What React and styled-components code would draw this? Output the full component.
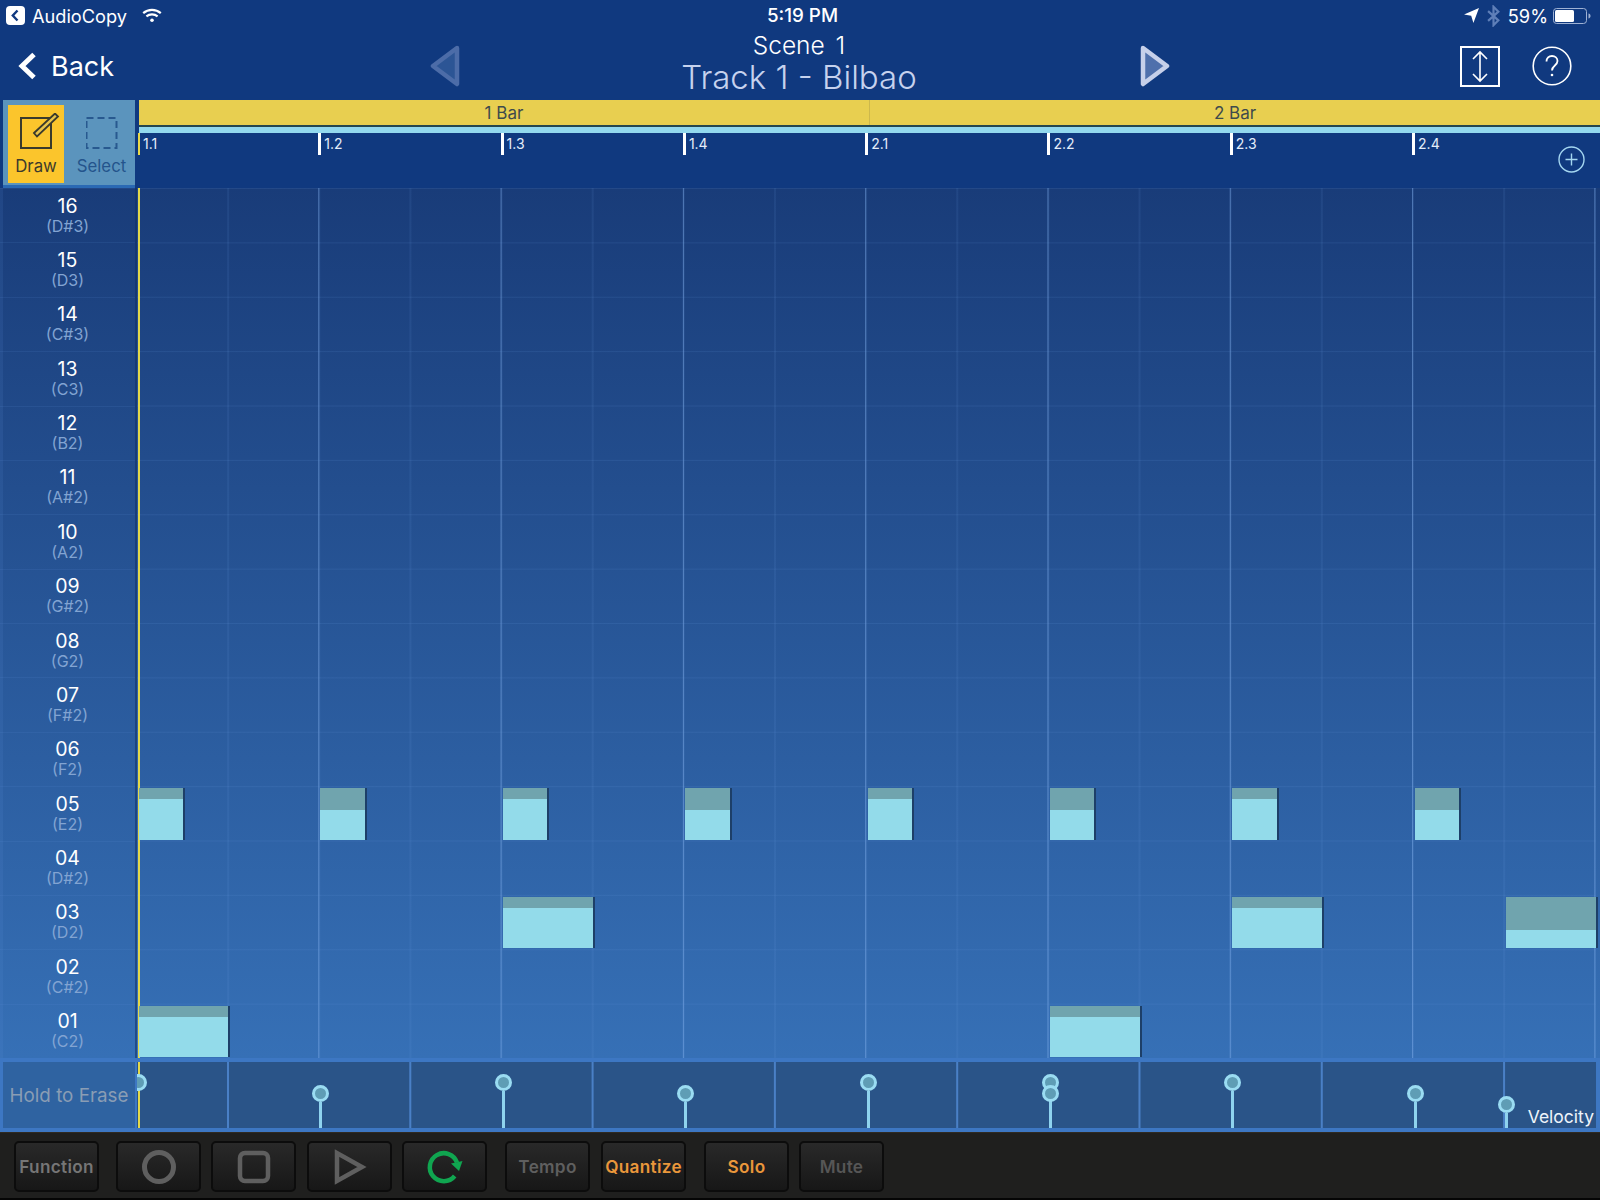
import React from 'react';
import styled, { createGlobalStyle } from 'styled-components';

const GlobalStyle = createGlobalStyle`
  html, body { margin: 0; padding: 0; background: #10397f; }
  body { font-family: Inter, "Noto Sans", sans-serif; }
`;

const Page = styled.div`
  display: flex;
  flex-direction: column;
  width: 1600px;
  height: 1200px;
  overflow: hidden;
  background: #10397f;
  color: #fff;
`;

const StatusBar = styled.div`
  display: grid;
  grid-template-columns: 1fr auto 1fr;
  align-items: center;
  height: 34px;
  padding: 0 9px 3px 6px;
  box-sizing: border-box;
  font-size: 18.2px;
`;

const StatusGroup = styled.div`
  display: flex;
  align-items: center;
  gap: ${p => p.$gap || 7}px;
  justify-content: ${p => (p.$right ? 'flex-end' : 'flex-start')};
`;

const WifiSlot = styled.span`
  display: flex;
  margin-left: 8px;
`;

const Clock = styled.div`
  margin-left: 8px;
  font-size: 18.8px;
  font-weight: 500;
`;

const NavBar = styled.div`
  display: grid;
  grid-template-columns: 430px 30px 680px 30px 1fr;
  align-items: center;
  height: 66px;
  padding-bottom: 2px;
  box-sizing: border-box;
`;

const BackLink = styled.div`
  display: flex;
  align-items: center;
  gap: 14px;
  padding-left: 18px;
  font-size: 27px;
`;

const TitleBlock = styled.div`
  display: flex;
  flex-direction: column;
  align-items: center;
  margin: -4px 0 0 -2px;
`;

const SceneTitle = styled.div`
  font-size: 24.5px;
  font-weight: 300;
  line-height: 27px;
  word-spacing: 4px;
`;

const TrackTitle = styled.div`
  font-size: 33px;
  font-weight: 300;
  line-height: 37px;
  color: #c6d2ee;
`;

const NavActions = styled.div`
  display: flex;
  justify-content: flex-end;
  align-items: center;
  gap: 32px;
  padding-right: 28px;
`;

const TopRow = styled.div`
  display: flex;
  height: 88px;
`;

const ToolBox = styled.div`
  display: flex;
  flex: none;
  width: 132px;
  margin-left: 3px;
  margin-right: 2px;
  box-sizing: border-box;
  padding: 5px 1px 2px 5px;
  background: #5b94bd;
  border-bottom: 3px solid #2a69b4;
`;

const ToolButton = styled.div`
  display: flex;
  flex-direction: column;
  align-items: center;
  flex: none;
  width: ${p => (p.$active ? 56 : 65)}px;
  margin-left: ${p => (p.$active ? 0 : 5)}px;
  padding-top: 8px;
  box-sizing: border-box;
  background: ${p => (p.$active ? '#fbc52c' : 'transparent')};
  color: ${p => (p.$active ? '#3c3a2c' : '#24548c')};
  font-size: 16.8px;
  line-height: 20px;
  svg { margin-bottom: 7px; }
`;

const Timeline = styled.div`
  display: flex;
  flex-direction: column;
  flex: 1;
`;

const BarStrip = styled.div`
  display: flex;
  height: 25px;
  margin-left: 2px;
  background: #e8cf50;
`;

const BarCell = styled.div`
  flex: 1;
  display: flex;
  align-items: center;
  justify-content: center;
  color: #3e4a4c;
  font-size: 17px;
  & + & { border-left: 1px solid #cdb84c; }
`;

const CyanStrip = styled.div`
  height: 6px;
  margin-left: 2px;
  background: #93d9ee;
  border-top: 2px solid #25474f;
`;

const Ruler = styled.div`
  display: grid;
  grid-template-columns: repeat(8, 182.3px);
  flex: 1;
`;

const BeatCell = styled.div`
  display: flex;
  align-items: flex-start;
  min-width: 0;
`;

const BeatTick = styled.div`
  width: ${p => (p.$first ? 2 : 3)}px;
  height: 22px;
  margin-left: ${p => (p.$first ? 1 : -1)}px;
  background: ${p => (p.$first ? '#e8d84a' : '#fff')};
`;

const BeatLabel = styled.span`
  margin: 2px 0 0 3px;
  font-size: 14px;
  line-height: 18px;
  color: #e4edfa;
`;

const PlusButton = styled.div`
  margin: 13px 10px 0 auto;
  line-height: 0;
`;

const Body = styled.div`
  display: flex;
  height: 870px;
  background: linear-gradient(180deg, #193c79 0%, #3670b6 100%);
`;

const LabelColumn = styled.div`
  display: flex;
  flex-direction: column;
  flex: none;
  width: 137px;
  box-sizing: border-box;
  border-right: 2px solid rgba(16, 48, 100, 0.55);
  box-shadow: inset 3px 0 0 rgba(100, 150, 220, 0.12);
`;

const KeyLabel = styled.div`
  display: flex;
  flex: 1;
  flex-direction: column;
  align-items: center;
  padding: 5.500px 0 0 0;
  box-sizing: border-box;
  border-top: 1px solid rgba(100, 150, 220, 0.12);
`;

const KeyNumber = styled.div`
  font-size: 19.500px;
  line-height: 22px;
`;

const KeyName = styled.div`
  font-size: 16px;
  line-height: 19px;
  color: #82a4d2;
`;

const Roll = styled.div`
  display: grid;
  grid-template-columns: repeat(32, 1fr);
  grid-template-rows: repeat(16, 1fr);
  width: 1459px;
  flex: none;
  background-image:
    linear-gradient(90deg, transparent 1px, #e3d94a 1px, #e3d94a 2.500px, transparent 2.500px),
    linear-gradient(rgba(100, 150, 220, 0.14) 1px, transparent 1px),
    linear-gradient(90deg, rgba(130, 175, 235, 0.5) 1.300px, transparent 1.300px),
    linear-gradient(90deg, rgba(110, 160, 230, 0.1) 2px, transparent 2px);
  background-size: 100% 100%, 100% 54.375px, 182.3px 100%, 91.15px 100%;
  background-position: 0 0, 0 0, -1px 0, -1px 0;
  background-repeat: no-repeat, repeat, repeat, repeat;
`;

const Note = styled.div`
  grid-column: ${p => p.$col} / span ${p => p.$span};
  grid-row: ${p => p.$row};
  margin: 2px -2px 1px ${p => (p.$col === 1 ? 2 : 1)}px;
  border-right: 2px solid #1d3f68;
  background: linear-gradient(
    180deg,
    #70a4ae ${p => p.$head}px,
    #93dbea ${p => p.$head}px
  );
`;

const LaneRow = styled.div`
  display: flex;
  height: 74px;
  box-sizing: border-box;
  padding: 4px 4px 4px 3px;
  background: #3d77c3;
`;

const EraseCell = styled.div`
  display: flex;
  flex: none;
  align-items: center;
  justify-content: center;
  width: 132px;
  padding-top: 1px;
  box-sizing: border-box;
  background: #2f63a1;
  color: #8a9db4;
  font-size: 18.800px;
`;

const VelocityLane = styled.div`
  position: relative;
  display: grid;
  grid-template-columns: repeat(32, 1fr);
  width: 1459px;
  margin-left: 2px;
  overflow: hidden;
  background-color: #2a5488;
  background-image:
    linear-gradient(90deg, transparent 1px, #e3d94a 1px, #e3d94a 2.500px, transparent 2.500px),
    linear-gradient(90deg, #4a80c6 2px, transparent 2px);
  background-size: 100% 100%, 182.3px 100%;
  background-position: 0 0, 90px 0;
  background-repeat: no-repeat, repeat;
`;

const VelocityStem = styled.div`
  grid-column: ${p => p.$col};
  grid-row: 1;
  align-self: end;
  display: flex;
  flex-direction: column;
  align-items: center;
  width: 17px;
  height: ${p => p.$height}px;
  margin-left: ${p => p.$dx}px;
  &::after {
    content: '';
    flex: 1;
    width: 3px;
    background: ${p => (p.$noStem ? 'transparent' : '#8fd3ee')};
  }
`;

const VelocityKnob = styled.div`
  flex: none;
  width: 17px;
  height: 17px;
  box-sizing: border-box;
  border: 3px solid #9adcf2;
  border-radius: 50%;
  background: #5f9db5;
`;

const VelocityTag = styled.div`
  position: absolute;
  right: 2px;
  bottom: 1px;
  font-size: 17.500px;
  line-height: 20px;
  color: #eef4fb;
`;

const BottomBar = styled.div`
  display: flex;
  align-items: flex-start;
  height: 68px;
  box-sizing: border-box;
  padding: 8px 0 0 14px;
  background: #1f1f1e;
  border-top: 1px solid #2f2a22;
  border-bottom: 2px solid #050505;
`;

const TransportButton = styled.div`
  display: flex;
  align-items: center;
  justify-content: center;
  flex: none;
  width: 85px;
  height: 51px;
  box-sizing: border-box;
  margin-left: ${p => p.$gap || 0}px;
  border: 2px solid #0c0c0c;
  border-radius: 5px;
  background: linear-gradient(180deg, #292929 0%, #171717 100%);
  color: ${p => p.$color || '#6a6a6a'};
  font-size: 17.200px;
  font-weight: 600;
  letter-spacing: 0.3px;
`;

const noteNames = ['D#3', 'D3', 'C#3', 'C3', 'B2', 'A#2', 'A2', 'G#2', 'G2', 'F#2', 'F2', 'E2', 'D#2', 'D2', 'C#2', 'C2'];
const beats = ['1.1', '1.2', '1.3', '1.4', '2.1', '2.2', '2.3', '2.4'];

// row counts from the top of the roll, 4 cols to a beat, head is the dark part (velocity)
const notes = [
  { row: 12, col: 1, span: 1, head: 11 },
  { row: 12, col: 5, span: 1, head: 22 },
  { row: 12, col: 9, span: 1, head: 11 },
  { row: 12, col: 13, span: 1, head: 22 },
  { row: 12, col: 17, span: 1, head: 11 },
  { row: 12, col: 21, span: 1, head: 22 },
  { row: 12, col: 25, span: 1, head: 11 },
  { row: 12, col: 29, span: 1, head: 22 },
  { row: 14, col: 9, span: 2, head: 11 },
  { row: 14, col: 25, span: 2, head: 11 },
  { row: 14, col: 31, span: 2, head: 33 },
  { row: 16, col: 1, span: 2, head: 11 },
  { row: 16, col: 21, span: 2, head: 11 },
];

const knobs = [
  { col: 1, height: 54, dx: -7, noStem: true },
  { col: 5, height: 43, dx: -7 },
  { col: 9, height: 54, dx: -7 },
  { col: 13, height: 43, dx: -7 },
  { col: 17, height: 54, dx: -7 },
  { col: 21, height: 54, dx: -7 },
  { col: 21, height: 43, dx: -7 },
  { col: 25, height: 54, dx: -7 },
  { col: 29, height: 43, dx: -7 },
  { col: 31, height: 32, dx: -7 },
];

const AppBadge = () => (
  <svg width="19" height="19" viewBox="0 0 19 19">
    <rect width="19" height="19" rx="4" fill="#fff" />
    <path d="M11.500 4.500 6.800 9.500l4.700 5" fill="none" stroke="#10397f" strokeWidth="2.400" />
  </svg>
);

const WifiIcon = () => (
  <svg width="20" height="15" viewBox="0 0 20 15" fill="none" stroke="#fff" strokeWidth="2.200">
    <path d="M1.200 5.200c5-4.400 12.600-4.400 17.600 0" />
    <path d="M4.400 8.400c3.200-2.600 8-2.600 11.200 0" />
    <circle cx="10" cy="12.200" r="1.800" fill="#fff" stroke="none" />
  </svg>
);

const LocationIcon = () => (
  <svg width="15" height="15" viewBox="0 0 15 15">
    <path d="M15 0 0 6.600l7.200 1.200L9.400 15z" fill="#fff" />
  </svg>
);

const BluetoothIcon = () => (
  <svg width="13" height="22" viewBox="0 0 12 20" fill="none" stroke="#5f7fb8" strokeWidth="2">
    <path d="M1 5.500 10.500 14 6 18.500v-17L10.500 6 1 14.500" />
  </svg>
);

const BatteryIcon = () => (
  <svg width="38" height="16" viewBox="0 0 38 16">
    <rect x="0.500" y="0.500" width="33" height="15" rx="3" fill="none" stroke="#9fb2d4" />
    <rect x="2" y="2" width="19" height="12" rx="1.500" fill="#fff" />
    <path d="M35.500 5.500c1.200.3 2 1.200 2 2.500s-.8 2.200-2 2.500z" fill="#9fb2d4" />
  </svg>
);

const BackChevron = () => (
  <svg width="19" height="28" viewBox="0 0 19 28">
    <path d="M16 2.500 4 14l12 11.500" fill="none" stroke="#fff" strokeWidth="5" />
  </svg>
);

const SceneArrow = ({ dir, fill, stroke }) => (
  <svg width="30" height="42" viewBox="0 0 30 42">
    <path
      d={dir === 'left' ? 'M27 3 3 21l24 18z' : 'M3 3l24 18L3 39z'}
      fill={fill}
      stroke={stroke}
      strokeWidth="4.500"
      strokeLinejoin="round"
    />
  </svg>
);

const HeightIcon = () => (
  <svg width="40" height="41" viewBox="0 0 40 41" fill="none" stroke="#fff">
    <rect x="1" y="1" width="38" height="39" strokeWidth="2" />
    <path d="M20 6v29M13 13l7-7 7 7M13 28l7 7 7-7" strokeWidth="1.600" />
  </svg>
);

const HelpIcon = () => (
  <svg width="40" height="40" viewBox="0 0 40 40" fill="none" stroke="#fff">
    <circle cx="20" cy="20" r="18.800" strokeWidth="1.600" />
    <path d="M14.500 15.500c0-3.400 2.400-5.500 5.500-5.500s5.500 2 5.500 5c0 4.500-5.500 4.500-5.500 9.500" strokeWidth="1.800" />
    <circle cx="20" cy="29" r="1.300" fill="#fff" stroke="none" />
  </svg>
);

const PlusIcon = () => (
  <svg width="27" height="27" viewBox="0 0 27 27" fill="none" stroke="#a4d6f0" strokeWidth="1.400">
    <circle cx="13.500" cy="13.500" r="12.500" />
    <path d="M13.500 7.500v12M7.500 13.500h12" />
  </svg>
);

const DrawIcon = () => (
  <svg width="48" height="36" viewBox="0 0 48 36" fill="none">
    <rect x="9" y="5" width="30" height="30" stroke="#3a3a2c" strokeWidth="2" />
    <path d="M22 20 43 0.500l3 3L25 23.500z" fill="#e8c44a" stroke="#3a3a2c" strokeWidth="1.800" />
  </svg>
);

const SelectIcon = () => (
  <svg width="32" height="36" viewBox="0 0 32 36" fill="none">
    <rect x="0.500" y="5" width="30" height="30" stroke="#28598f" strokeWidth="2" strokeDasharray="7 4" />
  </svg>
);

const RecordIcon = () => (
  <svg width="36" height="36" viewBox="0 0 36 36" fill="none">
    <circle cx="18" cy="18" r="14.500" stroke="#5f5f5f" strokeWidth="5" />
  </svg>
);

const StopIcon = () => (
  <svg width="36" height="36" viewBox="0 0 36 36" fill="none">
    <rect x="4" y="4" width="28" height="28" rx="5" stroke="#5f5f5f" strokeWidth="4.500" />
  </svg>
);

const PlayIcon = () => (
  <svg width="36" height="36" viewBox="0 0 36 36" fill="none">
    <path d="M5 4v28l25-14z" stroke="#5f5f5f" strokeWidth="4.500" />
  </svg>
);

const LoopIcon = () => (
  <svg width="38" height="36" viewBox="0 0 38 36" fill="none">
    <path d="M28.700 27A14 14 0 1 1 31 13.500" stroke="#10a550" strokeWidth="4.500" />
    <path d="M25 14.500l11.500-2.500-3.500 10z" fill="#10a550" />
  </svg>
);

const App = () => {
  return (
    <Page>
      <GlobalStyle />
      <StatusBar>
        <StatusGroup>
          <AppBadge />
          <span>AudioCopy</span>
          <WifiSlot><WifiIcon /></WifiSlot>
        </StatusGroup>
        <Clock>5:19 PM</Clock>
        <StatusGroup $right $gap={8}>
          <LocationIcon />
          <BluetoothIcon />
          <StatusGroup as="span" $gap={5}><span>59%</span><BatteryIcon /></StatusGroup>
        </StatusGroup>
      </StatusBar>

      <NavBar>
        <BackLink><BackChevron />Back</BackLink>
        <SceneArrow dir="left" fill="#2c5595" stroke="#4c6ca8" />
        <TitleBlock>
          <SceneTitle>Scene 1</SceneTitle>
          <TrackTitle>Track 1 - Bilbao</TrackTitle>
        </TitleBlock>
        <SceneArrow dir="right" fill="#4f70ac" stroke="#c6d0ea" />
        <NavActions>
          <HeightIcon />
          <HelpIcon />
        </NavActions>
      </NavBar>

      <TopRow>
        <ToolBox>
          <ToolButton $active><DrawIcon />Draw</ToolButton>
          <ToolButton><SelectIcon />Select</ToolButton>
        </ToolBox>
        <Timeline>
          <BarStrip>
            <BarCell>1 Bar</BarCell>
            <BarCell>2 Bar</BarCell>
          </BarStrip>
          <CyanStrip />
          <Ruler>
            {beats.map((beat, i) => (
              <BeatCell key={beat}>
                <BeatTick $first={i === 0} />
                <BeatLabel>{beat}</BeatLabel>
                {i === 7 && <PlusButton><PlusIcon /></PlusButton>}
              </BeatCell>
            ))}
          </Ruler>
        </Timeline>
      </TopRow>

      <Body>
        <LabelColumn>
          {noteNames.map((name, i) => (
            <KeyLabel key={name}>
              <KeyNumber>{String(16 - i).padStart(2, '0')}</KeyNumber>
              <KeyName>({name})</KeyName>
            </KeyLabel>
          ))}
        </LabelColumn>
        <Roll>
          {notes.map(n => (
            <Note key={`${n.row}-${n.col}`} $row={n.row} $col={n.col} $span={n.span} $head={n.head} />
          ))}
        </Roll>
      </Body>

      <LaneRow>
        <EraseCell>Hold to Erase</EraseCell>
        <VelocityLane>
          {knobs.map(k => (
            <VelocityStem key={`${k.col}-${k.height}`} $col={k.col} $height={k.height} $dx={k.dx} $noStem={k.noStem}>
              <VelocityKnob />
            </VelocityStem>
          ))}
          <VelocityTag>Velocity</VelocityTag>
        </VelocityLane>
      </LaneRow>

      <BottomBar>
        <TransportButton $color="#767676">Function</TransportButton>
        <TransportButton $gap={17}><RecordIcon /></TransportButton>
        <TransportButton $gap={10}><StopIcon /></TransportButton>
        <TransportButton $gap={11}><PlayIcon /></TransportButton>
        <TransportButton $gap={10}><LoopIcon /></TransportButton>
        <TransportButton $gap={18} $color="#5f5f5f">Tempo</TransportButton>
        <TransportButton $gap={11} $color="#ea973b">Quantize</TransportButton>
        <TransportButton $gap={18} $color="#ea973b">Solo</TransportButton>
        <TransportButton $gap={10} $color="#565656">Mute</TransportButton>
      </BottomBar>
    </Page>
  );
};

export default App;
